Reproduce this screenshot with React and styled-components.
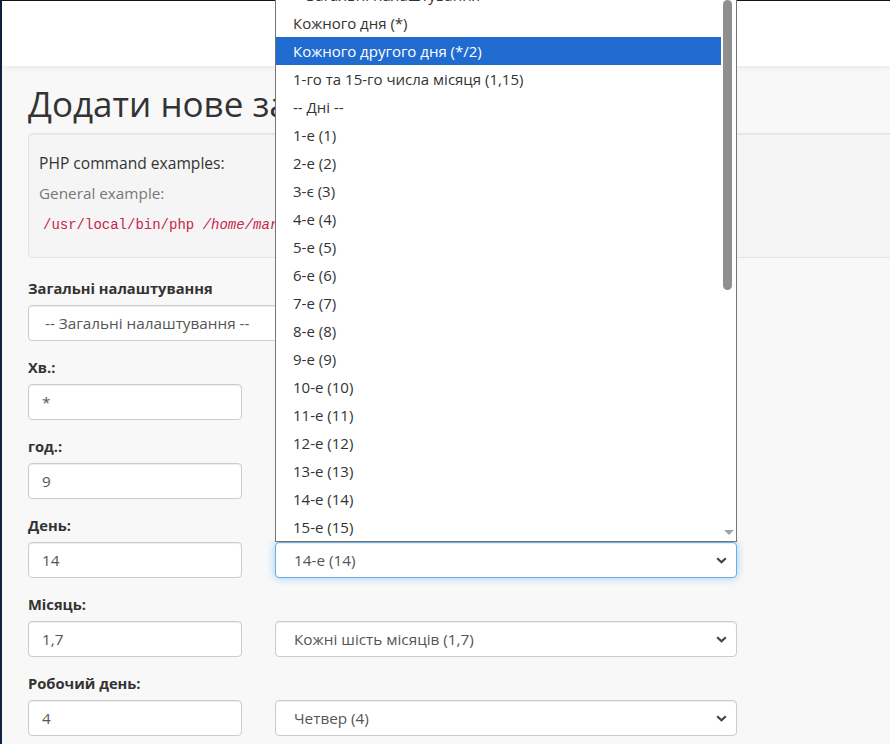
import React from 'react'
import styled, { createGlobalStyle } from 'styled-components'

const GlobalStyle = createGlobalStyle`
  html, body {
    margin: 0;
    padding: 0;
  }
  body {
    background: #f8f8f8;
    font-family: "Open Sans", "Liberation Sans", sans-serif;
    color: #333;
    overflow: hidden;
  }
`

const Page = styled.div`
  position: relative;
  min-height: 744px;
  box-sizing: border-box;
  border-left: 2px solid #0d2340;
  border-top: 1px solid #151515;
`

const Header = styled.div`
  height: 65px;
  background: #fff;
  box-shadow: 0 1px 6px rgba(0, 0, 0, 0.08);
`

const Main = styled.div`
  width: 1000px;
  padding-left: 26px;
`

const Title = styled.h1`
  margin: 18px 0 9px;
  font-size: 35px;
  line-height: 40px;
  font-weight: 400;
  color: #333;
  white-space: nowrap;
`

const Well = styled.div`
  background: #f5f5f5;
  border: 1px solid #e3e3e3;
  border-radius: 4px;
  padding: 14px 10px 17px;
  box-shadow: inset 0 1px 1px rgba(0, 0, 0, 0.05);
`

const WellLine = styled.div`
  font-size: ${(props) => props.$muted ? '15.3px' : '15.6px'};
  line-height: 30px;
  color: ${(props) => props.$muted ? '#777' : '#333'};
  white-space: nowrap;
`

const Code = styled.code`
  font-family: "Liberation Mono", "DejaVu Sans Mono", monospace;
  font-size: 14px;
  color: #c7254e;
  padding: 0 4px;
`

const Form = styled.div`
  margin-top: 20px;
`

const Group = styled.div`
  margin-bottom: 16px;
`

const Label = styled.label`
  display: block;
  font-weight: 700;
  font-size: 14.7px;
  line-height: 20px;
  margin-bottom: 7px;
  color: #333;
`

const Row = styled.div`
  display: grid;
  grid-template-columns: 214px 462px;
  gap: 33px;
`

const Input = styled.input`
  height: 36px;
  box-sizing: border-box;
  border: 1px solid #ccc;
  border-radius: 4px;
  background: #fff;
  padding: 0 13px;
  font-family: inherit;
  font-size: 15.3px;
  color: #555;
  outline: none;
  box-shadow: inset 0 1px 1px rgba(0, 0, 0, 0.075);
`

const SelectBox = styled.div`
  height: 36px;
  width: ${(props) => props.$width || 'auto'};
  box-sizing: border-box;
  display: flex;
  align-items: center;
  justify-content: space-between;
  border: 1px solid ${(props) => props.$focused ? '#66afe9' : '#ccc'};
  border-radius: 4px;
  background: #fff;
  padding: 0 9px 0 ${(props) => props.$indent || 18}px;
  font-size: 15.3px;
  color: #555;
  box-shadow: ${(props) => props.$focused
    ? 'inset 0 1px 1px rgba(0,0,0,.075), 0 0 8px rgba(102,175,233,.6)'
    : 'inset 0 1px 1px rgba(0,0,0,.075)'};
`

const Dropdown = styled.div`
  position: absolute;
  left: 273px;
  top: -1px;
  width: 462px;
  height: 542px;
  box-sizing: border-box;
  background: #fff;
  border: 1px solid #767676;
  border-top: 0;
  overflow: hidden;
`

const OptionList = styled.div`
  margin-top: -19px;
  margin-right: 15px;
`

const Option = styled.div`
  height: 28px;
  line-height: 28px;
  padding-left: 17px;
  font-size: 15px;
  white-space: nowrap;
  color: ${(props) => props.$selected ? '#fff' : '#333'};
  background: ${(props) => props.$selected ? '#1f6bcf' : 'transparent'};
`

const Scrollbar = styled.div`
  position: absolute;
  top: 0;
  right: 0;
  bottom: 0;
  width: 15px;
  background: #fff;
`

const Thumb = styled.div`
  margin-left: 2px;
  width: 9px;
  height: 290px;
  border-radius: 5px;
  background: #8f8f8f;
`

const ScrollArrow = styled.div`
  position: absolute;
  bottom: 6px;
  left: 3px;
  width: 0;
  height: 0;
  border-left: 5px solid transparent;
  border-right: 5px solid transparent;
  border-top: 5px solid #a3a3a3;
`

const Chevron = () => (
  <svg width="11" height="7" viewBox="0 0 11 7">
    <path d="M1.2 1.2 L5.5 5.3 L9.8 1.2" fill="none" stroke="#444" strokeWidth="2.2" />
  </svg>
)

const dayOptions = [
  '-- Загальні налаштування --',
  'Кожного дня (*)',
  'Кожного другого дня (*/2)',
  '1-го та 15-го числа місяця (1,15)',
  '-- Дні --',
  '1-е (1)', '2-е (2)', '3-є (3)', '4-е (4)', '5-е (5)',
  '6-е (6)', '7-е (7)', '8-е (8)', '9-е (9)', '10-е (10)',
  '11-е (11)', '12-е (12)', '13-е (13)', '14-е (14)', '15-е (15)',
  '16-е (16)',
]

const fields = [
  { label: 'Хв.:', value: '*', choice: 'Кожної хвилини (*)' },
  { label: 'год.:', value: '9', choice: '9:00 ранку (9)' },
  { label: 'День:', value: '14', choice: '14-е (14)', focused: true },
  { label: 'Місяць:', value: '1,7', choice: 'Кожні шість місяців (1,7)' },
  { label: 'Робочий день:', value: '4', choice: 'Четвер (4)' },
]

export default function App() {
  return (
    <>
      <GlobalStyle />
      <Page>
        <Header />
        <Main>
          <Title>Додати нове завдання cron</Title>
          <Well>
            <WellLine>PHP command examples:</WellLine>
            <WellLine $muted>General example:</WellLine>
            <WellLine>
              <Code>/usr/local/bin/php <i>/home/marketing/public_html/path/to/cron/script</i></Code>
            </WellLine>
          </Well>

          <Form>
            <Group>
              <Label>Загальні налаштування</Label>
              <SelectBox $width="440px" $indent={16}>
                <span>-- Загальні налаштування --</span>
                <Chevron />
              </SelectBox>
            </Group>
            {fields.map((f) => (
              <Group key={f.label}>
                <Label>{f.label}</Label>
                <Row>
                  <Input readOnly value={f.value} />
                  <SelectBox $focused={f.focused}>
                    <span>{f.choice}</span>
                    <Chevron />
                  </SelectBox>
                </Row>
              </Group>
            ))}
          </Form>
        </Main>

        <Dropdown>
          <OptionList>
            {dayOptions.map((o) => (
              <Option key={o} $selected={o === 'Кожного другого дня (*/2)'}>{o}</Option>
            ))}
          </OptionList>
          <Scrollbar>
            <Thumb />
            <ScrollArrow />
          </Scrollbar>
        </Dropdown>
      </Page>
    </>
  )
}
